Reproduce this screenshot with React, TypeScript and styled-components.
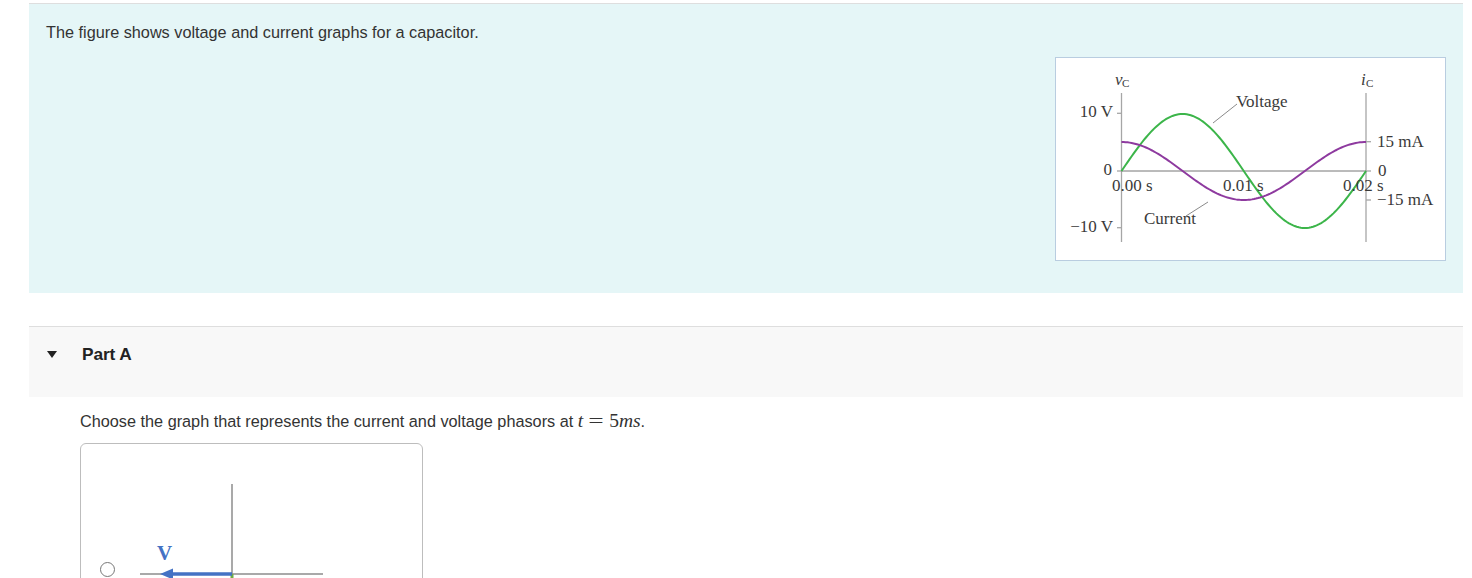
import React from 'react';
import styled, { createGlobalStyle } from 'styled-components';

const GlobalStyle = createGlobalStyle`
    body {
        margin: 0;
        background: #fff;
        font-family: "Liberation Sans", Arial, sans-serif;
        color: #333;
    }
`;

// chart geometry, in the figure's own coordinates
const X0 = 65.5;
const X1 = 310;
const Y0 = 113;
const PERIOD = X1 - X0;

const wave = (amp: number, fn: (a: number) => number) => {
    const pts: string[] = [];
    for (let i = 0; i <= 120; i++) {
        const x = X0 + (PERIOD * i) / 120;
        const y = Y0 - amp * fn((2 * Math.PI * (x - X0)) / PERIOD);
        pts.push(`${i === 0 ? 'M' : 'L'}${x.toFixed(2)},${y.toFixed(2)}`);
    }
    return pts.join(' ');
};

const CapacitorGraph: React.FC = () => (
    <svg width="389" height="202" viewBox="0 0 389 202">
        <g stroke="#a6a6a6" strokeWidth="1.3">
            <line x1={X0} y1="35" x2={X0} y2="184" />
            <line x1={X1} y1="35" x2={X1} y2="184" />
            <line x1="61" y1="55.3" x2={X0} y2="55.3" />
            <line x1="61" y1={Y0} x2={X0} y2={Y0} />
            <line x1="61" y1="169.7" x2={X0} y2="169.7" />
            <line x1={X1} y1="83.7" x2="315" y2="83.7" />
            <line x1={X1} y1={Y0} x2="315" y2={Y0} />
            <line x1={X1} y1="142" x2="315" y2="142" />
        </g>
        <line x1={X0} y1={Y0} x2={X1} y2={Y0} stroke="#777" strokeWidth="1" />
        <g stroke="#8a8a8a" strokeWidth="1">
            <line x1="157" y1="65" x2="181" y2="46" />
            <line x1="130" y1="158" x2="152" y2="144" />
        </g>
        <path d={wave(57, Math.sin)} fill="none" stroke="#3cb54a" strokeWidth="2" />
        <path d={wave(29, Math.cos)} fill="none" stroke="#8e3a9f" strokeWidth="2" />
        <g fill="#3a3a3a" fontFamily='"Liberation Serif", "Times New Roman", serif' fontSize="17">
            <text x="59" y="27" fontStyle="italic">v</text>
            <text x="66" y="29" fontSize="11">C</text>
            <text x="305" y="27" fontStyle="italic">i</text>
            <text x="310" y="29" fontSize="11">C</text>
            <text x="57" y="59" textAnchor="end">10 V</text>
            <text x="56" y="117" textAnchor="end">0</text>
            <text x="57" y="174" textAnchor="end">−10 V</text>
            <text x="56" y="133">0.00 s</text>
            <text x="167" y="133">0.01 s</text>
            <text x="287" y="133">0.02 s</text>
            <text x="321" y="89">15 mA</text>
            <text x="322" y="118">0</text>
            <text x="321" y="147">−15 mA</text>
            <text x="180" y="49">Voltage</text>
            <text x="88" y="166">Current</text>
        </g>
    </svg>
);

const PhasorGraph: React.FC = () => (
    <svg width="200" height="180" viewBox="0 0 200 180">
        <line x1="101" y1="0" x2="101" y2="180" stroke="#8c8c8c" strokeWidth="1.5" />
        <line x1="9" y1="90" x2="192" y2="90" stroke="#8c8c8c" strokeWidth="1.5" />
        <line x1="101" y1="90" x2="101" y2="180" stroke="#70ad47" strokeWidth="3" />
        <line x1="101" y1="90" x2="40" y2="90" stroke="#4472c4" strokeWidth="3.5" />
        <polygon points="29,90 42,84.5 42,95.5" fill="#4472c4" />
        <text x="26" y="76" fill="#4472c4" fontFamily='"Liberation Serif", serif' fontWeight="bold" fontSize="21">V</text>
    </svg>
);

export default function App() {
    return (
        <>
            <GlobalStyle />
            <Page>
                <Intro>
                    <IntroText>The figure shows voltage and current graphs for a capacitor.</IntroText>
                    <Figure>
                        <CapacitorGraph />
                    </Figure>
                </Intro>
                <PartHeader>
                    <Caret />
                    <PartTitle>Part A</PartTitle>
                </PartHeader>
                <PartBody>
                    <Question>
                        Choose the graph that represents the current and voltage phasors at{' '}
                        <MathVar>t</MathVar>
                        <MathOp>=</MathOp>
                        <MathNum>5</MathNum>
                        <MathVar>ms</MathVar>.
                    </Question>
                    <Choices>
                        <ChoiceRow>
                            <Radio />
                            <PhasorGraph />
                        </ChoiceRow>
                    </Choices>
                </PartBody>
            </Page>
        </>
    );
}

const Page = styled.div`
    margin-left: 29px;
    width: 1434px;
    padding-top: 3px;
`;

const Intro = styled.section`
    display: flex;
    flex-direction: column;
    background: #e5f6f7;
    border-top: 1px solid #dedede;
    padding: 18px 17px 32px 17px;
`;

const IntroText = styled.p`
    margin: 0;
    font-size: 16.25px;
    line-height: 21px;
`;

const Figure = styled.div`
    align-self: flex-end;
    margin-top: 14px;
    width: 389px;
    height: 202px;
    background: #fff;
    border: 1px solid #b9cde0;
`;

const PartHeader = styled.div`
    display: flex;
    align-items: center;
    margin-top: 33px;
    height: 71px;
    background: #f8f8f8;
    border-top: 1px solid #dedede;
    padding-left: 18px;
    padding-bottom: 15px;
    box-sizing: border-box;
`;

const Caret = styled.span`
    width: 0;
    height: 0;
    border-left: 5.5px solid transparent;
    border-right: 5.5px solid transparent;
    border-top: 7px solid #222;
`;

const PartTitle = styled.h3`
    margin: 0 0 0 25px;
    font-size: 17.3px;
    font-weight: bold;
    letter-spacing: -0.1px;
    color: #222;
`;

const PartBody = styled.div`
    padding-left: 51px;
`;

const Question = styled.p`
    margin: 13px 0 0;
    font-size: 16.25px;
    line-height: 21px;
`;

const MathVar = styled.span`
    font-family: "Liberation Serif", "Times New Roman", serif;
    font-style: italic;
    font-size: 19.5px;
`;

const MathNum = styled.span`
    font-family: "Liberation Serif", "Times New Roman", serif;
    font-size: 19.5px;
`;

const MathOp = styled.span`
    display: inline-block;
    width: 16px;
    text-align: center;
    font-family: "Liberation Serif", "Times New Roman", serif;
    font-size: 19.5px;
    transform: scaleX(1.4);
    margin: 0 5px 0 5px;
`;

const Choices = styled.div`
    margin-top: 11px;
    width: 341px;
    height: 220px;
    border: 1px solid #bdbdbd;
    border-radius: 6px;
`;

const ChoiceRow = styled.label`
    display: flex;
    align-items: center;
    padding-top: 40px;
    padding-left: 19px;
    gap: 16px;
`;

const Radio = styled.span`
    width: 13px;
    height: 13px;
    border: 1px solid #777;
    border-radius: 50%;
    margin-bottom: 10px;
    background: #fff;
`;
